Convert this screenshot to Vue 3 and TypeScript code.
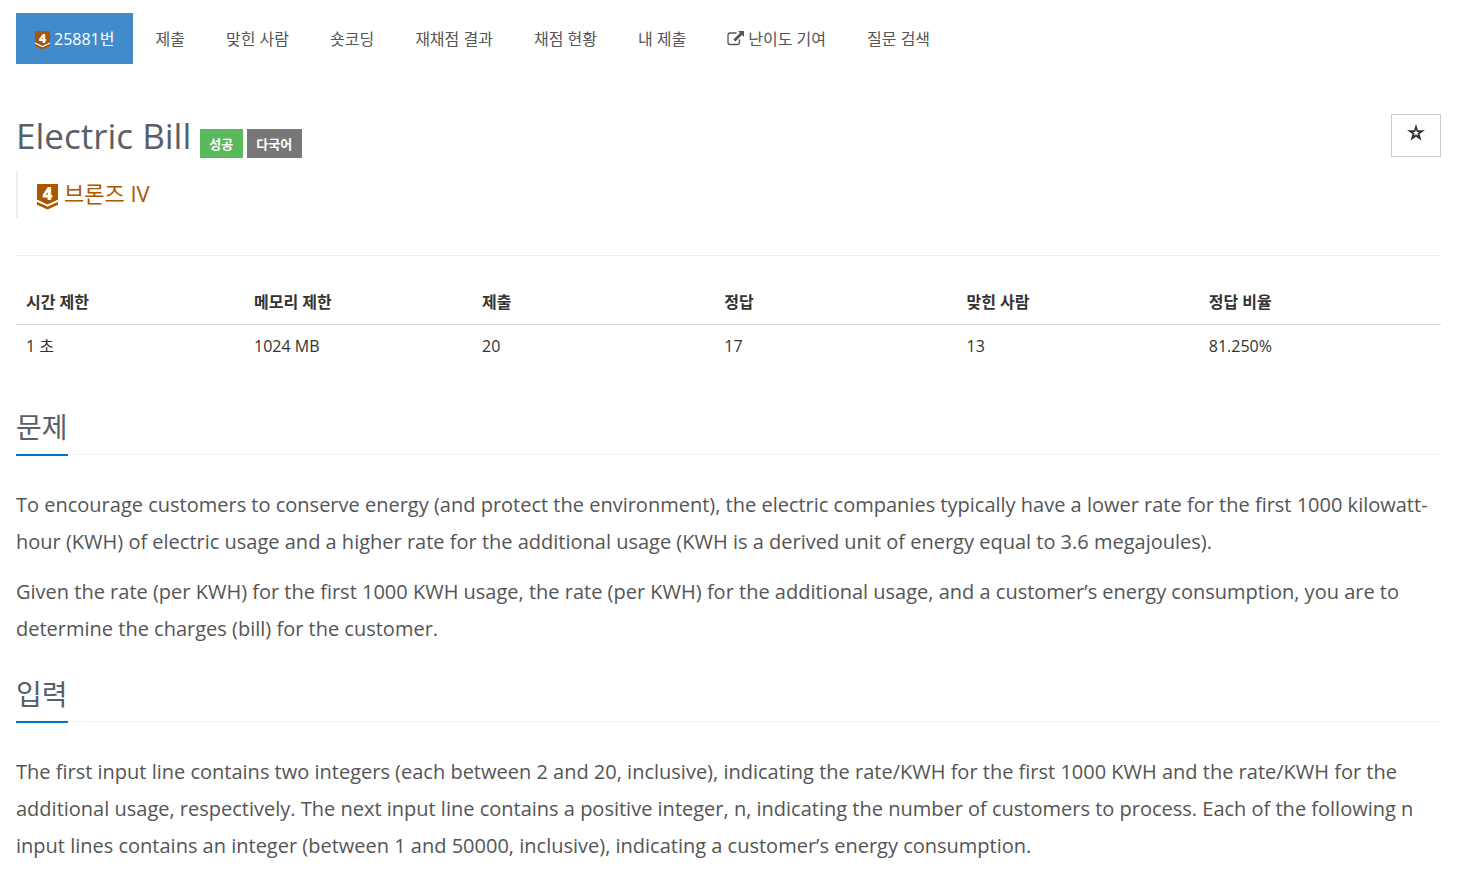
<script setup lang="ts">
interface MenuItem {
  label: string
  external?: boolean
}

const menu: MenuItem[] = [
  { label: '제출' },
  { label: '맞힌 사람' },
  { label: '숏코딩' },
  { label: '재채점 결과' },
  { label: '채점 현황' },
  { label: '내 제출' },
  { label: '난이도 기여', external: true },
  { label: '질문 검색' },
]

const info: { name: string; value: string }[] = [
  { name: '시간 제한', value: '1 초' },
  { name: '메모리 제한', value: '1024 MB' },
  { name: '제출', value: '20' },
  { name: '정답', value: '17' },
  { name: '맞힌 사람', value: '13' },
  { name: '정답 비율', value: '81.250%' },
]

const sections: { title: string; paragraphs: string[] }[] = [
  {
    title: '문제',
    paragraphs: [
      'To encourage customers to conserve energy (and protect the environment), the electric companies typically have a lower rate for the first 1000 kilowatt-hour (KWH) of electric usage and a higher rate for the additional usage (KWH is a derived unit of energy equal to 3.6 megajoules).',
      'Given the rate (per KWH) for the first 1000 KWH usage, the rate (per KWH) for the additional usage, and a customer’s energy consumption, you are to determine the charges (bill) for the customer.',
    ],
  },
  {
    title: '입력',
    paragraphs: [
      'The first input line contains two integers (each between 2 and 20, inclusive), indicating the rate/KWH for the first 1000 KWH and the rate/KWH for the additional usage, respectively. The next input line contains a positive integer, n, indicating the number of customers to process. Each of the following n input lines contains an integer (between 1 and 50000, inclusive), indicating a customer’s energy consumption.',
    ],
  },
]
</script>

<template>
  <div class="page">
    <nav>
      <ul class="menu">
        <li>
          <a href="#" class="active" aria-current="page">
            <svg class="tier-small" viewBox="0 0 22 27" aria-hidden="true">
              <path class="badge" d="M0 0h22v16.5l-11 5-11-5z" />
              <path class="chevron" d="M0 18.2l11 5 11-5v3.4l-11 5-11-5z" />
              <path class="gap" d="M0 16.5l11 5 11-5v1.9l-11 5-11-5z" />
              <text class="digit" x="11" y="17" text-anchor="middle">4</text>
            </svg>
            25881번
          </a>
        </li>
        <li v-for="item in menu" :key="item.label">
          <a href="#">
            <svg v-if="item.external" class="external" viewBox="0 0 17 15" aria-hidden="true">
              <path class="frame" d="M9.5 2H3.2Q1 2 1 4.2v7.1q0 2.2 2.2 2.2h7.1q2.2 0 2.2-2.2V8.5" />
              <path class="arrow" d="M11 0h6v6l-2-2-6.6 6.6-2-2L13 2z" />
            </svg>
            {{ item.label }}
          </a>
        </li>
      </ul>
    </nav>

    <header>
      <div class="title-row">
        <h1>Electric Bill</h1>
        <span class="label success">성공</span>
        <span class="label">다국어</span>
        <button type="button" class="favorite" aria-label="즐겨찾기">
          <svg viewBox="0 0 18 17" aria-hidden="true">
            <path fill-rule="evenodd" d="M9 0l2 6.2h7l-5.5 3.9 2.1 6.7L9 12.7l-5.6 4.1 2.1-6.7L0 6.2h7zM9 5.3L8.2 8H5.8l1.8 1.300-.7 2.500L9 10.300l2.100 1.500-.7-2.500L12.200 8H9.800z" />
          </svg>
        </button>
      </div>
      <blockquote>
        <svg class="tier-large" viewBox="0 0 22 27" aria-hidden="true">
          <path class="badge" d="M0 0h22v16.5l-11 5-11-5z" />
          <path class="chevron" d="M0 18.2l11 5 11-5v3.4l-11 5-11-5z" />
          <path class="gap" d="M0 16.5l11 5 11-5v1.9l-11 5-11-5z" />
          <text class="digit" x="11" y="17" text-anchor="middle">4</text>
        </svg>
        <span>브론즈 IV</span>
      </blockquote>
    </header>

    <main>
      <table>
        <thead>
          <tr>
            <th v-for="cell in info" :key="cell.name" scope="col">{{ cell.name }}</th>
          </tr>
        </thead>
        <tbody>
          <tr>
            <td v-for="cell in info" :key="cell.name">{{ cell.value }}</td>
          </tr>
        </tbody>
      </table>

      <section v-for="section in sections" :key="section.title">
        <div class="headline">
          <h2>{{ section.title }}</h2>
        </div>
        <p v-for="text in section.paragraphs" :key="text">{{ text }}</p>
      </section>
    </main>
  </div>
</template>

<style>
body {
  margin: 0;
  background: #fff;
}
</style>

<style scoped>
.page {
  padding: 13px 23px 0 16px;
  font-family: "Open Sans", "Noto Sans CJK KR", sans-serif;
  font-size: 16px;
  line-height: 23px;
  color: #333;
}

.menu {
  display: flex;
  flex-wrap: wrap;
  gap: 3px;
  margin: 0;
  padding: 0;
  list-style: none;
}

.menu a {
  display: flex;
  align-items: center;
  gap: 4px;
  padding: 15px 19px 13px;
  color: #555;
  text-decoration: none;
}

.menu .active {
  background: #428bca;
  color: #fff;
}

.badge,
.chevron {
  fill: #ad5600;
}

.digit,
.gap {
  fill: #fff;
}

.digit {
  font-size: 18px;
  font-weight: 800;
  line-height: 18px;
}

.tier-small,
.tier-large {
  overflow: visible;
}

.tier-small {
  width: 15px;
  height: 19px;
  margin-top: 2px;
}

.external {
  width: 17px;
  height: 15px;
  margin-bottom: 2px;
}

.frame {
  fill: none;
  stroke: #555;
  stroke-width: 1.3;
}

.arrow {
  fill: #555;
}

header {
  padding-bottom: 37px;
  border-bottom: 1px solid #eee;
}

.title-row {
  display: flex;
  align-items: flex-end;
  gap: 4px;
  margin-top: 50px;
}

h1 {
  margin: 0 5px 0 0;
  font-size: 35px;
  font-weight: 400;
  line-height: 44px;
  color: #585f69;
}

.label {
  padding: 5px 10px 3px 9px;
  background: #777;
  color: #fff;
  font-size: 13px;
  font-weight: 600;
  line-height: 21px;
}

.success {
  background: #5cb85c;
}

.favorite {
  display: flex;
  justify-content: center;
  align-self: flex-start;
  width: 50px;
  height: 43px;
  margin-left: auto;
  padding: 9px 0 0;
  background: #fff;
  border: 1px solid #ccc;
}

.favorite svg {
  width: 18px;
  height: 17px;
  fill: #333;
}

blockquote {
  display: flex;
  align-items: center;
  gap: 6px;
  margin: 13px 0 0;
  padding: 5px 19px 7px;
  border-left: 2px solid #eee;
  color: #ad5600;
  font-size: 22px;
  line-height: 35px;
}

.tier-large {
  width: 21px;
  height: 26px;
  margin-top: 7px;
}

table {
  width: 100%;
  margin-top: 25px;
  margin-bottom: 39px;
  border-collapse: collapse;
  table-layout: fixed;
}

th,
td {
  box-sizing: border-box;
  width: 17%;
  padding: 10px;
  text-align: left;
}

th:nth-child(-n + 2),
td:nth-child(-n + 2) {
  width: 16%;
}

th {
  border-bottom: 1px solid #ddd;
}

section {
  margin-top: 27px;
}

.headline {
  display: flex;
  margin-bottom: 31px;
  border-bottom: 1px dotted #e4e9f0;
}

h2 {
  margin: 0 0 -2px;
  padding-bottom: 7px;
  border-bottom: 2px solid #0076c0;
  font-size: 28px;
  font-weight: 400;
  line-height: 40px;
  color: #585f69;
}

p {
  margin: 0 0 13px;
  font-size: 20px;
  line-height: 37px;
  color: #555;
}
</style>
